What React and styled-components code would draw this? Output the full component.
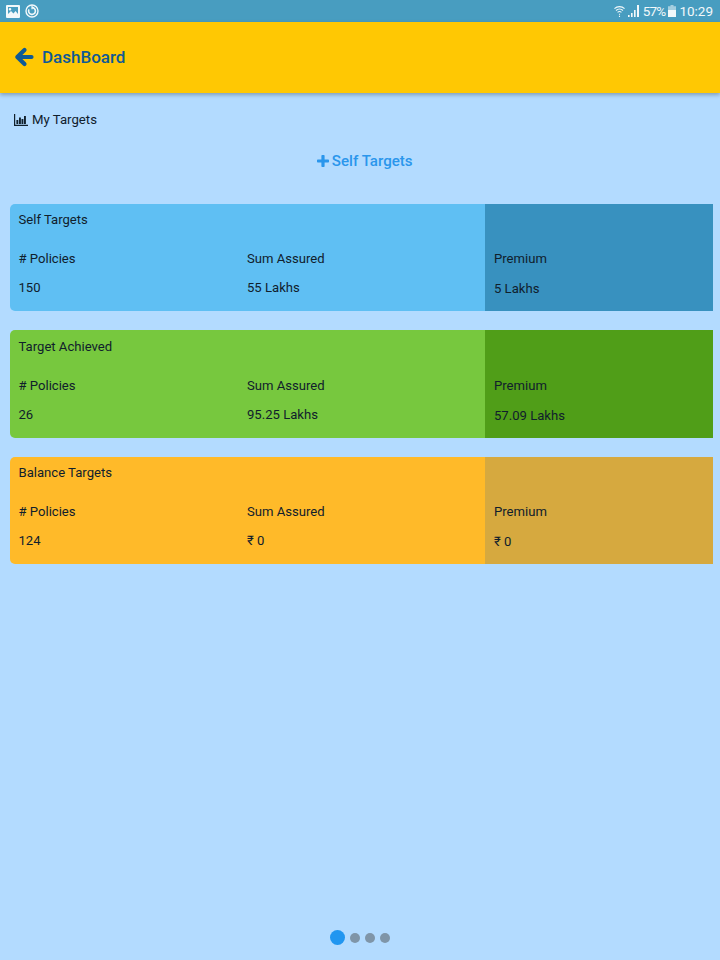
import styled, { createGlobalStyle } from "styled-components"

const GlobalStyle = createGlobalStyle`
  * {
    box-sizing: border-box;
  }
  body {
    margin: 0;
    background: #b3dbff;
    font-family: Roboto, "Liberation Sans", sans-serif;
  }
`

const Page = styled.div`
  width: 720px;
  height: 960px;
  display: flex;
  flex-direction: column;
  background: #b3dbff;
`

const StatusBar = styled.div`
  height: 22px;
  flex: none;
  display: flex;
  align-items: center;
  justify-content: space-between;
  padding: 0 7px 0 6px;
  background: #489dc0;
  color: #f2f8fa;
`

const StatusGroup = styled.div`
  display: flex;
  align-items: center;
  gap: ${(p) => p.$gap}px;
`

const StatusText = styled.span`
  font-size: ${(p) => p.$size}px;
  letter-spacing: ${(p) => p.$spacing || 0}px;
  line-height: 22px;
`

const Header = styled.div`
  height: 71px;
  flex: none;
  display: flex;
  align-items: center;
  gap: 8px;
  padding: 0 0 2px 14px;
  background: #ffc803;
  box-shadow: 0 2px 4px rgba(0, 0, 0, 0.28);
`

const Title = styled.h1`
  margin: 0;
  font-size: 17px;
  font-weight: 500;
  color: #0f5a94;
`

const Content = styled.div`
  flex: 1;
  display: flex;
  flex-direction: column;
  padding: 0 7px 15px 9.5px;
`

const Section = styled.div`
  display: flex;
  align-items: center;
  gap: 4px;
  height: 17px;
  margin: 18px 0 0 4.5px;
  font-size: 13.2px;
  color: #10202c;
`

const AddLink = styled.div`
  display: flex;
  align-items: center;
  justify-content: center;
  gap: 3px;
  height: 22px;
  margin: 22px 0 31.5px;
  padding-left: 7px;
  font-size: 15.1px;
  font-weight: 500;
  color: #2a96ec;
`

const Cards = styled.div`
  display: flex;
  flex-direction: column;
  gap: 19px;
`

const Card = styled.div`
  height: 107.6px;
  display: grid;
  grid-template-columns: 475.5px 1fr;
  border-radius: 5px 0 0 5px;
  overflow: hidden;
  color: #10202c;
  font-size: 13.1px;
  background: ${(p) => p.$bg};
`

const Main = styled.div`
  display: flex;
  flex-direction: column;
  padding: 8.5px 9px 0;
`

const CardTitle = styled.div`
  height: 16px;
  line-height: 16px;
`

const Columns = styled.div`
  display: grid;
  grid-template-columns: 228.5px 1fr;
  margin-top: 23px;
`

const Side = styled.div`
  padding: 47.5px 9px 0;
  background: ${(p) => p.$bg};
`

const Label = styled.div`
  height: 16px;
  line-height: 16px;
`

const Value = styled.div`
  height: 16px;
  line-height: 16px;
  margin-top: ${(p) => p.$gap}px;
`

const Dots = styled.div`
  margin-top: auto;
  display: flex;
  align-items: center;
  justify-content: center;
  gap: 5px;
  padding-right: 3px;
`

const Dot = styled.span`
  width: ${(p) => (p.$active ? 15 : 10)}px;
  height: ${(p) => (p.$active ? 15 : 10)}px;
  border-radius: 50%;
  background: ${(p) => (p.$active ? "#2196f0" : "#7f95a8")};
`

const ImageIcon = () => (
  <svg width="14" height="13" viewBox="0 0 14 13">
    <path fill="currentColor" fillRule="evenodd" d="M1 0h12a1 1 0 0 1 1 1v11a1 1 0 0 1-1 1H1a1 1 0 0 1-1-1V1a1 1 0 0 1 1-1zM2 2v7l3-3 2.5 2.5L9.5 6 12 9V2zM4 3a1.3 1.3 0 1 1 0 2.6A1.3 1.3 0 0 1 4 3z" />
  </svg>
)

const SyncIcon = () => (
  <svg width="14" height="14" viewBox="0 0 14 14" fill="none" stroke="currentColor">
    <circle cx="7" cy="7" r="6" strokeWidth="1.4" />
    <path d="M7 3.6 A3.4 3.4 0 1 1 4 5.4" strokeWidth="1.6" />
    <path d="M7 1.6v3.6" strokeWidth="1.2" />
  </svg>
)

const WifiIcon = () => (
  <svg width="11" height="13" viewBox="0 0 12 13" fill="none" stroke="currentColor" strokeWidth="1.2">
    <path d="M.5 3.4a8 8 0 0 1 11 0M2.2 5.4a5.6 5.6 0 0 1 7.6 0M3.9 7.4a3.2 3.2 0 0 1 4.2 0" />
    <path d="M6 9v1M6 11v1.5" />
  </svg>
)

const SignalIcon = () => (
  <svg width="12" height="12" viewBox="0 0 12 12" fill="currentColor">
    <path d="M0 10h1.6v2H0zM3 8h1.6v4H3zM6 5h1.6v7H6zM9 0h2v12H9z" />
  </svg>
)

const BatteryIcon = () => (
  <svg width="8" height="12" viewBox="0 0 8 12">
    <path fill="currentColor" opacity="0.55" d="M2.5 0h3v1.2H8V5H0V1.2h2.5z" />
    <path fill="currentColor" d="M0 5h8v7H0z" />
  </svg>
)

const BackIcon = () => (
  <svg width="20" height="20" viewBox="0 0 20 20" fill="none" stroke="#0f5a94" strokeWidth="4.2" strokeLinecap="round" strokeLinejoin="round">
    <path d="M17.5 10H4M10.5 3 3.3 10l7.2 7" />
  </svg>
)

const ChartIcon = () => (
  <svg width="14" height="12" viewBox="0 0 14 12" fill="#10202c">
    <path d="M0 0h1.2v10.8H14V12H0zM2.4 6h1.9v4H2.4zM5 3.5h1.9V10H5zM7.5 5h1.9v5H7.5zM10 2h1.9v8H10z" />
  </svg>
)

const PlusIcon = () => (
  <svg width="12" height="12" viewBox="0 0 12 12" fill="#2a96ec">
    <path d="M4.4.8A.8.8 0 0 1 5.2 0h1.6a.8.8 0 0 1 .8.8v3.6h3.6a.8.8 0 0 1 .8.8v1.6a.8.8 0 0 1-.8.8H7.6v3.6a.8.8 0 0 1-.8.8H5.2a.8.8 0 0 1-.8-.8V7.6H.8A.8.8 0 0 1 0 6.8V5.2a.8.8 0 0 1 .8-.8h3.6z" />
  </svg>
)

const targets = [
  { title: "Self Targets", bg: "#5fbff3", side: "#3891bf", policies: "150", sum: "55 Lakhs", premium: "5 Lakhs" },
  { title: "Target Achieved", bg: "#77c83e", side: "#509e18", policies: "26", sum: "95.25 Lakhs", premium: "57.09 Lakhs" },
  { title: "Balance Targets", bg: "#ffba29", side: "#d6a93f", policies: "124", sum: "₹ 0", premium: "₹ 0" },
]

const App = () => {
  return (
    <Page>
      <GlobalStyle />
      <StatusBar>
        <StatusGroup $gap={5}>
          <ImageIcon />
          <SyncIcon />
        </StatusGroup>
        <StatusGroup $gap={3}>
          <WifiIcon />
          <SignalIcon />
          <StatusText $size={13.5} $spacing={-0.8}>57%</StatusText>
          <BatteryIcon />
          <StatusText $size={13.5}>10:29</StatusText>
        </StatusGroup>
      </StatusBar>
      <Header>
        <BackIcon />
        <Title>DashBoard</Title>
      </Header>
      <Content>
        <Section>
          <ChartIcon />
          My Targets
        </Section>
        <AddLink>
          <PlusIcon />
          Self Targets
        </AddLink>
        <Cards>
          {targets.map((t) => (
            <Card key={t.title} $bg={t.bg}>
              <Main>
                <CardTitle>{t.title}</CardTitle>
                <Columns>
                  <div>
                    <Label># Policies</Label>
                    <Value $gap={13}>{t.policies}</Value>
                  </div>
                  <div>
                    <Label>Sum Assured</Label>
                    <Value $gap={13}>{t.sum}</Value>
                  </div>
                </Columns>
              </Main>
              <Side $bg={t.side}>
                <Label>Premium</Label>
                <Value $gap={14}>{t.premium}</Value>
              </Side>
            </Card>
          ))}
        </Cards>
        <Dots>
          <Dot $active />
          <Dot />
          <Dot />
          <Dot />
        </Dots>
      </Content>
    </Page>
  )
}

export default App
